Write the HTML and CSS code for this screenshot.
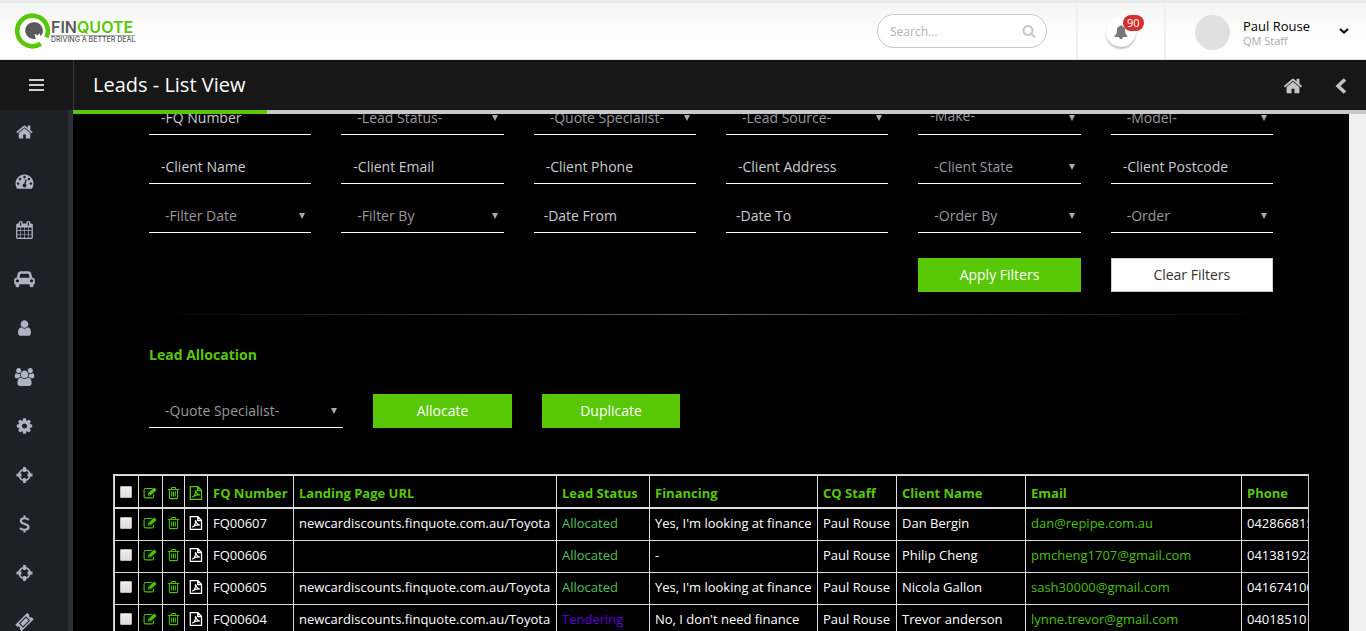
FILE: index.html
```html
<!DOCTYPE html>
<html lang="en">
<head>
<meta charset="utf-8">
<meta name="viewport" content="width=device-width, initial-scale=1">
<title>Leads - List View</title>
<link rel="stylesheet" href="styles.css">
</head>
<body>
<svg class="sprite" aria-hidden="true">
  <symbol id="i-home" viewBox="0 0 1792 1792"><path d="M1472 992v480q0 26-19 45t-45 19h-384v-384h-256v384h-384q-26 0-45-19t-19-45v-480q0-1 .5-3t.5-3l575-474 575 474q1 2 1 6zm223-69l-62 74q-8 9-21 11h-3q-13 0-21-7l-692-577-692 577q-12 8-24 7-13-2-21-11l-62-74q-8-10-7-23.500t11-21.500l719-599q32-26 76-26t76 26l244 204v-195q0-14 9-23t23-9h192q14 0 23 9t9 23v408l219 182q10 8 11 21.500t-7 23.500z"/></symbol>
  <symbol id="i-search" viewBox="0 0 1792 1792"><path d="M1216 832q0-185-131.500-316.500t-316.500-131.500-316.500 131.500-131.500 316.500 131.500 316.500 316.500 131.500 316.500-131.500 131.500-316.500zm512 832q0 52-38 90t-90 38q-54 0-90-38l-343-342q-179 124-399 124-143 0-273.500-55.500t-225-150-150-225-55.500-273.500 55.500-273.500 150-225 225-150 273.500-55.500 273.500 55.500 225 150 150 225 55.500 273.500q0 220-124 399l343 343q37 37 37 90z"/></symbol>
  <symbol id="i-bell" viewBox="0 0 1792 1792"><path d="M1664 1408q0 52-38 90t-90 38h-448q0 106-75 181t-181 75-181-75-75-181h-448q-52 0-90-38t-38-90q50-42 91-88t85-119.500 74.500-158.500 50-206 19.500-260q0-152 117-282.500t307-158.500q-8-19-8-39 0-40 28-68t68-28 68 28 28 68q0 20-8 39 190 28 307 158.500t117 282.500q0 139 19.500 260t50 206 74.500 158.500 85 119.500 91 88z" transform="translate(64 0)"/></symbol>
  <symbol id="i-dash" viewBox="0 0 1792 1792"><path d="M384 1152q0-53-37.500-90.500t-90.500-37.500-90.500 37.500-37.500 90.500 37.500 90.500 90.500 37.500 90.500-37.500 37.500-90.500zm192-448q0-53-37.500-90.500t-90.500-37.500-90.500 37.500-37.500 90.500 37.500 90.500 90.500 37.500 90.500-37.500 37.500-90.500zm428 481l101-382q6-26-7.500-48.500t-38.500-29.500-48 6.500-30 39.500l-101 382q-60 5-107 43.500t-63 98.500q-20 77 20 146t117 89 146-20 89-117q16-60-6-117t-72-91zm660-33q0-53-37.500-90.500t-90.500-37.500-90.500 37.500-37.500 90.500 37.500 90.500 90.500 37.500 90.500-37.500 37.500-90.500zm-640-640q0-53-37.500-90.500t-90.500-37.500-90.500 37.500-37.500 90.500 37.500 90.500 90.500 37.500 90.500-37.500 37.500-90.500zm448 192q0-53-37.500-90.500t-90.500-37.500-90.500 37.500-37.500 90.500 37.500 90.500 90.500 37.500 90.500-37.500 37.500-90.500zm320 448q0 261-141 483-19 29-54 29h-1402q-35 0-54-29-141-221-141-483 0-182 71-348t191-286 286-191 348-71 348 71 286 191 191 286 71 348z"/></symbol>
  <symbol id="i-calendar" viewBox="0 0 1792 1792"><path d="M192 1664h288v-288h-288v288zm352 0h320v-288h-320v288zm-352-352h288v-320h-288v320zm352 0h320v-320h-320v320zm-352-384h288v-288h-288v288zm736 736h320v-288h-320v288zm-384-736h320v-288h-320v288zm768 736h288v-288h-288v288zm-384-352h320v-320h-320v320zm-352-864v-288q0-13-9.500-22.500t-22.500-9.500h-64q-13 0-22.500 9.500t-9.500 22.500v288q0 13 9.500 22.500t22.500 9.500h64q13 0 22.500-9.500t9.500-22.500zm736 864h288v-320h-288v320zm-384-384h320v-288h-320v288zm384 0h288v-288h-288v288zm32-480v-288q0-13-9.500-22.500t-22.500-9.500h-64q-13 0-22.500 9.500t-9.500 22.500v288q0 13 9.500 22.500t22.500 9.500h64q13 0 22.500-9.500t9.500-22.500zm384-64v1280q0 52-38 90t-90 38h-1408q-52 0-90-38t-38-90v-1280q0-52 38-90t90-38h128v-96q0-66 47-113t113-47h64q66 0 113 47t47 113v96h384v-96q0-66 47-113t113-47h64q66 0 113 47t47 113v96h128q52 0 90 38t38 90z"/></symbol>
  <symbol id="i-car" viewBox="0 0 2048 1792"><path d="M480 1088q0-66-47-113t-113-47-113 47-47 113 47 113 113 47 113-47 47-113zm36-320h1016l-89-357q-2-8-14-17.500t-21-9.500h-768q-9 0-21 9.500t-14 17.500zm1372 320q0-66-47-113t-113-47-113 47-47 113 47 113 113 47 113-47 47-113zm160-96v384q0 14-9 23t-23 9h-96v128q0 80-56 136t-136 56-136-56-56-136v-128h-1024v128q0 80-56 136t-136 56-136-56-56-136v-128h-96q-14 0-23-9t-9-23v-384q0-93 65.500-158.500t158.500-65.500h28l105-419q23-94 104-157.500t179-63.500h768q98 0 179 63.500t104 157.500l105 419h28q93 0 158.500 65.500t65.500 158.500z"/></symbol>
  <symbol id="i-user" viewBox="0 0 1792 1792"><path d="M1536 1399q0 109-62.500 187t-150.500 78h-854q-88 0-150.500-78t-62.500-187q0-85 8.500-160.500t31.500-152 58.500-131 94-89 134.500-34.500q131 128 313 128t313-128q76 0 134.500 34.500t94 89 58.500 131 31.500 152 8.500 160.500zm-256-887q0 159-112.500 271.500t-271.500 112.500-271.500-112.500-112.500-271.500 112.500-271.500 271.500-112.500 271.500 112.500 112.500 271.500z"/></symbol>
  <symbol id="i-users" viewBox="0 0 1920 1792"><path d="M593 896q-162 5-265 128h-134q-82 0-138-40.500t-56-118.500q0-353 124-353 6 0 43.500 21t97.500 42.500 119 21.500q67 0 133-23-5 37-5 66 0 159 93 256zm1071 637q0 120-73 189.500t-194 69.500h-874q-121 0-194-69.500t-73-189.500q0-53 3.500-103.500t14-109 26.500-108.500 43-97.500 62-81 85.500-53.500 111.500-20q10 0 43 21.500t73 48 107 48 135 21.500 135-21.500 107-48 73-48 43-21.500q61 0 111.500 20t85.500 53.500 62 81 43 97.500 26.500 108.500 14 109 3.500 103.500zm-1024-1277q0 106-75 181t-181 75-181-75-75-181 75-181 181-75 181 75 75 181zm704 384q0 159-112.500 271.500t-271.500 112.500-271.500-112.500-112.500-271.500 112.500-271.500 271.500-112.500 271.500 112.500 112.500 271.500zm576 225q0 78-56 118.500t-138 40.500h-134q-103-123-265-128 93-97 93-256 0-29-5-66 66 23 133 23 59 0 119-21.500t97.500-42.500 43.500-21q124 0 124 353zm-128-609q0 106-75 181t-181 75-181-75-75-181 75-181 181-75 181 75 75 181z"/></symbol>
  <symbol id="i-cog" viewBox="0 0 1792 1792"><path d="M1152 896q0-106-75-181t-181-75-181 75-75 181 75 181 181 75 181-75 75-181zm512-109v222q0 12-8 23t-20 13l-185 28q-19 54-39 91 35 50 107 138 10 12 10 25t-9 23q-27 37-99 108t-94 71q-12 0-26-9l-138-108q-44 23-91 38-16 136-29 186-7 28-36 28h-222q-14 0-24.500-8.500t-11.500-21.500l-28-184q-49-16-90-37l-141 107q-10 9-25 9-14 0-25-11-126-114-165-168-7-10-7-23 0-12 8-23 15-21 51-66.500t54-70.500q-27-50-41-99l-183-27q-13-2-21-12.500t-8-23.500v-222q0-12 8-23t19-13l186-28q14-46 39-92-40-57-107-138-10-12-10-24 0-10 9-23 26-36 98.500-107.500t94.500-71.500q13 0 26 10l138 107q44-23 91-38 16-136 29-186 7-28 36-28h222q14 0 24.500 8.500t11.500 21.500l28 184q49 16 90 37l142-107q9-9 24-9 13 0 25 10 129 119 165 170 7 8 7 22 0 12-8 23-15 21-51 66.500t-54 70.500q26 50 41 98l183 28q13 2 21 12.500t8 23.500z"/></symbol>
  <symbol id="i-cross" viewBox="0 0 18 18"><circle cx="9" cy="9" r="5.400" fill="none" stroke="currentColor" stroke-width="1.700"/><path d="M7.600 1h2.800v5H7.600zM7.600 12h2.800v5H7.600zM1 7.600h5v2.800H1zM12 7.600h5v2.800h-5z"/></symbol>
  <symbol id="i-dollar" viewBox="0 0 18 18"><path d="M13.300 4.900C12 3.800 10.600 3.300 9 3.300c-2.200 0-3.700 1-3.700 2.700 0 4 7.700 2 7.700 6 0 1.800-1.600 2.800-3.900 2.800-1.900 0-3.400-.7-4.600-1.900M9 .5v2.800M9 14.800v2.700" fill="none" stroke="currentColor" stroke-width="2.100"/></symbol>
  <symbol id="i-ticket" viewBox="0 0 18 18"><g transform="rotate(-45 9 9)"><path fill-rule="evenodd" d="M.5 4.500h17v2.700a1.900 1.900 0 0 0 0 3.600v2.700H.5v-2.700a1.900 1.900 0 0 0 0-3.600zM4 6v6h10V6z"/><path d="M5 7h8v4H5z"/></g></symbol>
  <symbol id="i-edit" viewBox="0 0 14 14"><path d="M9.500 2.500H2.600a1.500 1.500 0 0 0-1.500 1.500v6.400a1.500 1.500 0 0 0 1.500 1.500H9a1.500 1.500 0 0 0 1.500-1.500V8.500" fill="none" stroke="currentColor" stroke-width="1.100"/><path d="M5 9.500V7.200l6.300-5.700L13.700 4 7.400 9.500z"/><path d="M6 8l1 .7" stroke="#000" stroke-width=".8"/></symbol>
  <symbol id="i-trash" viewBox="0 0 14 14"><path d="M.8 3.500h11.400M4.200 3.300l.7-1.800h3.200l.7 1.800M2.400 3.600v8.200q0 .8.800.8h6.600q.8 0 .8-.8V3.600M4.700 5.500v5M6.500 5.500v5M8.300 5.500v5" fill="none" stroke="currentColor" stroke-width="1.100"/></symbol>
  <symbol id="i-pdf" viewBox="0 0 14 14"><path d="M1.300.7h7.600l3.600 3.600v9H1.300zM8.700.8v3.700h3.700" fill="none" stroke="currentColor" stroke-width="1.300"/><path d="M3.200 11.300C5.500 10 6.800 7 6.400 4.300c1 3 2.200 4.600 4.400 4.900-2.200-.6-4.700.1-7 1.500" fill="none" stroke="currentColor" stroke-width="1.200"/></symbol>
</svg>

<header class="topbar">
  <a class="brand" href="#" aria-label="Finquote home">
    <svg class="brand-mark" viewBox="0 0 36 36" aria-hidden="true">
      <path d="M25.800 30.800A15.300 15.300 0 1 1 31.400 24.400" fill="none" stroke="#58c706" stroke-width="4.600"/>
      <path d="M18.600 9.200a8.400 8.400 0 1 0 2.200 16.500l-1.400-4.900 3.200 1.600 1.800-2.200 1.300 2.900A8.400 8.400 0 0 0 18.600 9.200z" fill="#58595b"/>
    </svg>
    <span class="brand-text">
      <span class="brand-name"><span class="brand-fin">FIN</span>QUOTE</span>
      <span class="brand-tag">DRIVING A BETTER DEAL</span>
    </span>
  </a>
  <form class="search">
    <input class="search-input" type="text" placeholder="Search..." aria-label="Search">
    <button class="search-btn" type="button" aria-label="Search"><svg class="ico-search"><use href="#i-search"/></svg></button>
  </form>
  <div class="notify">
    <button class="bell" type="button" aria-label="Notifications"><svg class="ico-bell"><use href="#i-bell"/></svg><span class="badge">90</span></button>
  </div>
  <button class="profile" type="button">
    <span class="avatar"></span>
    <span class="who"><span class="who-name">Paul Rouse</span><span class="who-role">QM Staff</span></span>
    <svg class="caret" viewBox="0 0 10 6" aria-hidden="true"><path d="M1 1l4 3.600L9 1" fill="none" stroke="#000" stroke-width="2"/></svg>
  </button>
</header>

<div class="titlebar">
  <button class="menu-btn" type="button" aria-label="Menu"><svg class="ico-bars" viewBox="0 0 15 12"><path d="M0 0h15v2H0zM0 5h15v2H0zM0 10h15v2H0z"/></svg></button>
  <h1 class="title">Leads - List View</h1>
  <nav class="crumbs">
    <a href="#" aria-label="Home"><svg class="ico-home"><use href="#i-home"/></svg></a>
    <a href="#" aria-label="Back"><svg class="ico-back" viewBox="0 0 12 16"><path d="M10 1.500L3 8l7 6.500" fill="none" stroke="currentColor" stroke-width="3.500"/></svg></a>
  </nav>
</div>

<div class="shell">
  <nav class="sidebar">
    <a href="#" aria-label="Home"><svg class="nav-ico"><use href="#i-home"/></svg></a>
    <a href="#" aria-label="Dashboard"><svg class="nav-ico"><use href="#i-dash"/></svg></a>
    <a href="#" aria-label="Calendar"><svg class="nav-ico"><use href="#i-calendar"/></svg></a>
    <a href="#" aria-label="Cars"><svg class="nav-ico"><use href="#i-car"/></svg></a>
    <a href="#" aria-label="Client"><svg class="nav-ico"><use href="#i-user"/></svg></a>
    <a href="#" aria-label="Teams"><svg class="nav-ico"><use href="#i-users"/></svg></a>
    <a href="#" aria-label="Settings"><svg class="nav-ico"><use href="#i-cog"/></svg></a>
    <a href="#" aria-label="Leads"><svg class="nav-ico"><use href="#i-cross"/></svg></a>
    <a href="#" aria-label="Finance"><svg class="nav-ico"><use href="#i-dollar"/></svg></a>
    <a href="#" aria-label="Targets"><svg class="nav-ico"><use href="#i-cross"/></svg></a>
    <a href="#" aria-label="Tickets"><svg class="nav-ico"><use href="#i-ticket"/></svg></a>
  </nav>

  <main class="main">
    <div class="progress"><div class="progress-fill"></div></div>
    <div class="viewport">
      <div class="page">
        <form class="filters">
          <input class="field" type="text" placeholder="-FQ Number" aria-label="FQ Number">
          <div class="pick"><select class="field" aria-label="Lead Status"><option>-Lead Status-</option></select></div>
          <div class="pick"><select class="field" aria-label="Quote Specialist"><option>-Quote Specialist-</option></select></div>
          <div class="pick"><select class="field" aria-label="Lead Source"><option>-Lead Source-</option></select></div>
          <div class="pick"><select class="field field-make" aria-label="Make"><option>-Make-</option></select></div>
          <div class="pick"><select class="field" aria-label="Model"><option>-Model-</option></select></div>

          <input class="field" type="text" placeholder="-Client Name" aria-label="Client Name">
          <input class="field" type="text" placeholder="-Client Email" aria-label="Client Email">
          <input class="field" type="text" placeholder="-Client Phone" aria-label="Client Phone">
          <input class="field" type="text" placeholder="-Client Address" aria-label="Client Address">
          <div class="pick"><select class="field" aria-label="Client State"><option>-Client State</option></select></div>
          <input class="field" type="text" placeholder="-Client Postcode" aria-label="Client Postcode">

          <div class="pick"><select class="field" aria-label="Filter Date"><option>-Filter Date</option></select></div>
          <div class="pick"><select class="field" aria-label="Filter By"><option>-Filter By</option></select></div>
          <input class="field field-date" type="text" placeholder="-Date From" aria-label="Date From">
          <input class="field field-date" type="text" placeholder="-Date To" aria-label="Date To">
          <div class="pick"><select class="field" aria-label="Order By"><option>-Order By</option></select></div>
          <div class="pick"><select class="field" aria-label="Order"><option>-Order</option></select></div>

          <button class="btn btn-apply" type="button">Apply Filters</button>
          <button class="btn btn-clear" type="reset">Clear Filters</button>
        </form>
        <hr class="rule">
        <h2 class="section">Lead Allocation</h2>
        <form class="allocate">
          <div class="pick"><select class="field" aria-label="Allocate to Quote Specialist"><option>-Quote Specialist-</option></select></div>
          <button class="btn" type="button">Allocate</button>
          <button class="btn" type="button">Duplicate</button>
        </form>
      </div>

      <div class="table-wrap">
        <table class="leads">
          <colgroup><col class="c-check"><col class="c-edit"><col class="c-trash"><col class="c-pdf"><col class="c-fq"><col class="c-url"><col class="c-status"><col class="c-fin"><col class="c-staff"><col class="c-client"><col class="c-email"><col class="c-phone"></colgroup>
          <thead>
            <tr>
              <th class="th-check"><input class="tick" type="checkbox" aria-label="Select all"></th>
              <th><svg class="row-ico"><use href="#i-edit"/></svg></th>
              <th><svg class="row-ico"><use href="#i-trash"/></svg></th>
              <th><svg class="row-ico"><use href="#i-pdf"/></svg></th>
              <th>FQ Number</th><th>Landing Page URL</th><th>Lead Status</th><th>Financing</th><th>CQ Staff</th><th>Client Name</th><th>Email</th><th>Phone</th>
            </tr>
          </thead>
          <tbody>
            <tr>
              <td><input class="tick" type="checkbox" aria-label="Select FQ00607"></td>
              <td><a href="#" aria-label="Edit"><svg class="row-ico"><use href="#i-edit"/></svg></a></td>
              <td><a href="#" aria-label="Delete"><svg class="row-ico"><use href="#i-trash"/></svg></a></td>
              <td><svg class="row-ico"><use href="#i-pdf"/></svg></td>
              <td>FQ00607</td><td>newcardiscounts.finquote.com.au/Toyota</td><td class="allocated">Allocated</td><td>Yes, I'm looking at finance</td><td>Paul Rouse</td><td>Dan Bergin</td><td><a href="#">dan@repipe.com.au</a></td><td>0428668150</td>
            </tr>
            <tr>
              <td><input class="tick" type="checkbox" aria-label="Select FQ00606"></td>
              <td><a href="#" aria-label="Edit"><svg class="row-ico"><use href="#i-edit"/></svg></a></td>
              <td><a href="#" aria-label="Delete"><svg class="row-ico"><use href="#i-trash"/></svg></a></td>
              <td><svg class="row-ico"><use href="#i-pdf"/></svg></td>
              <td>FQ00606</td><td></td><td class="allocated">Allocated</td><td>-</td><td>Paul Rouse</td><td>Philip Cheng</td><td><a href="#">pmcheng1707@gmail.com</a></td><td>0413819280</td>
            </tr>
            <tr>
              <td><input class="tick" type="checkbox" aria-label="Select FQ00605"></td>
              <td><a href="#" aria-label="Edit"><svg class="row-ico"><use href="#i-edit"/></svg></a></td>
              <td><a href="#" aria-label="Delete"><svg class="row-ico"><use href="#i-trash"/></svg></a></td>
              <td><svg class="row-ico"><use href="#i-pdf"/></svg></td>
              <td>FQ00605</td><td>newcardiscounts.finquote.com.au/Toyota</td><td class="allocated">Allocated</td><td>Yes, I'm looking at finance</td><td>Paul Rouse</td><td>Nicola Gallon</td><td><a href="#">sash30000@gmail.com</a></td><td>0416741000</td>
            </tr>
            <tr>
              <td><input class="tick" type="checkbox" aria-label="Select FQ00604"></td>
              <td><a href="#" aria-label="Edit"><svg class="row-ico"><use href="#i-edit"/></svg></a></td>
              <td><a href="#" aria-label="Delete"><svg class="row-ico"><use href="#i-trash"/></svg></a></td>
              <td><svg class="row-ico"><use href="#i-pdf"/></svg></td>
              <td>FQ00604</td><td>newcardiscounts.finquote.com.au/Toyota</td><td class="tendering">Tendering</td><td>No, I don't need finance</td><td>Paul Rouse</td><td>Trevor anderson</td><td><a href="#">lynne.trevor@gmail.com</a></td><td>0401851010</td>
            </tr>
          </tbody>
        </table>
      </div>
    </div>
  </main>
</div>
</body>
</html>
```

FILE: styles.css
```css
* { box-sizing: border-box; }

body {
  margin: 0;
  height: 100vh;
  display: flex;
  flex-direction: column;
  overflow: hidden;
  background: #f0f0f0;
  color: #fff;
  font: 14px/20px "Open Sans", "Noto Sans", sans-serif;
}

button, input, select { font: inherit; }
button { cursor: pointer; }
a { color: #58c706; text-decoration: none; }
svg { display: block; fill: currentColor; }
.sprite { display: none; }

/* Top bar */
.topbar {
  flex: none;
  display: flex;
  align-items: stretch;
  height: 60px;
  border-top: 3px solid #ebebeb;
  border-bottom: 1px solid #e4e4e4;
  background: linear-gradient(#f4f4f4, #fff 60%);
}
.brand {
  display: flex;
  align-items: center;
  margin-right: auto;
  padding-left: 15px;
}
.brand-mark { width: 36px; height: 36px; }
.brand-text { display: flex; flex-direction: column; padding-top: 1px; }
.brand-name {
  color: #58c706;
  font: 600 16px/16px Inter, sans-serif;
  border-bottom: 1px solid #aaa;
}
.brand-fin { color: #58595b; }
.brand-tag { color: #58595b; font: 500 7px/8px Inter, sans-serif; white-space: nowrap; }

.search {
  display: flex;
  align-items: center;
  align-self: flex-start;
  width: 170px;
  height: 34px;
  margin: 11px 29px 0 0;
  padding: 0 10px 0 12px;
  border: 1px solid #c8c8c8;
  border-radius: 17px;
  background: #fff;
}
.search-input {
  flex: 1;
  min-width: 0;
  padding: 2px 0 0;
  border: 0;
  outline: 0;
  background: none;
  font-size: 12px;
}
.search-input::placeholder { color: #b3b3b3; }
.search-btn { padding: 0; border: 0; background: none; color: #c8c8c8; }
.ico-search { width: 14px; height: 14px; }

.notify {
  display: flex;
  justify-content: center;
  width: 88px;
  padding: 12px 0;
  border-left: 2px solid #f0f0f0;
}
.bell {
  position: relative;
  display: flex;
  align-items: center;
  justify-content: center;
  width: 30px;
  height: 30px;
  margin-top: 2px;
  padding: 0;
  border: 0;
  border-radius: 50%;
  background: #fff;
  box-shadow: 0 2px 2px rgba(0, 0, 0, .25);
  color: #777;
}
.ico-bell { width: 14px; height: 14px; }
.badge {
  position: absolute;
  top: -2px;
  left: 17px;
  padding: 0 4px;
  border-radius: 8px;
  background: #d3302f;
  color: #fff;
  font-size: 11px;
  line-height: 16px;
}

.profile {
  display: flex;
  align-items: center;
  width: 202px;
  padding: 3px 17px 0 29px;
  border: 0;
  border-left: 2px solid #f0f0f0;
  background: none;
  text-align: left;
}
.avatar { width: 35px; height: 35px; border-radius: 50%; background: #e0e0e0; }
.who { display: flex; flex-direction: column; margin: 0 auto 0 13px; padding-top: 1px; }
.who-name { color: #000; font-size: 13px; line-height: 15px; }
.who-role { color: #aaa; font-size: 11px; line-height: 14px; }
.caret { width: 10px; height: 6px; margin-bottom: 4px; }

/* Title bar */
.titlebar {
  flex: none;
  display: flex;
  align-items: center;
  height: 50px;
  background: #171717;
}
.menu-btn {
  display: flex;
  align-items: center;
  justify-content: center;
  width: 74px;
  height: 50px;
  padding: 0;
  border: 0;
  border-right: 1px solid #383838;
  background: none;
  color: #d0d0d0;
}
.ico-bars { width: 15px; height: 12px; }
.title { margin: 0 auto 0 19px; font-size: 20px; font-weight: 400; line-height: 28px; }
.crumbs { display: flex; align-items: center; gap: 32px; padding: 1px 19px 0 0; }
.crumbs a { color: #c4c4c4; }
.ico-home { width: 20px; height: 20px; }
.ico-back { width: 12px; height: 16px; }

/* Body */
.shell { flex: 1; display: flex; min-height: 0; }
.sidebar {
  flex: none;
  width: 73px;
  overflow: hidden;
  border-right: 5px solid #2e3038;
  background: #1d2027;
}
.sidebar a { display: block; padding: 13px 19px 18px 0; color: #adb5c2; }
.nav-ico { width: 21px; height: 18px; margin: 0 auto; }

.main { flex: 1; display: flex; flex-direction: column; min-width: 0; }
.progress { flex: none; height: 4px; background: #c8c8c8; }
.progress-fill { width: 15%; height: 4px; background: #58c706; }
.viewport {
  flex: 1;
  min-height: 0;
  margin-right: 17px;
  overflow: hidden;
  background: #000;
}
/* Content rests at its scrolled position under the title bar */
.page { margin-top: -13px; padding: 0 76px; }

.filters { display: grid; grid-template-columns: repeat(6, 1fr); gap: 15px 30px; }
.field {
  display: block;
  width: 100%;
  min-width: 0;
  height: 34px;
  padding: 0 12px;
  border: 0;
  border-bottom: 1px solid #fff;
  border-radius: 0;
  outline: 0;
  background: #000;
  color: #ccc;
}
.field::placeholder { color: #ccc; opacity: 1; }
.field-date { padding: 0 10px; }
.pick { position: relative; min-width: 0; }
.pick .field { padding: 0 20px 0 16px; appearance: none; color: #999; }
.pick .field-make { padding: 0 20px 4px 12px; }
.pick::after {
  content: "";
  position: absolute;
  top: 14px;
  right: 6px;
  border: 3px solid transparent;
  border-top: 6px solid #aaa;
  border-bottom: 0;
  pointer-events: none;
}

.btn {
  height: 34px;
  padding: 0 12px;
  border: 1px solid #58c706;
  background: #58c706;
  color: #fff;
}
.btn-apply { grid-column: 5; margin-top: 10px; }
.btn-clear { margin-top: 10px; border-color: #ccc; background: #fff; color: #333; }

.rule {
  height: 1px;
  margin: 22px 0 0;
  border: 0;
  background: linear-gradient(90deg, transparent, #666, transparent);
}
.section { margin: 30px 0 29px; color: #58c706; font-size: 14px; font-weight: 700; line-height: 20px; }
.allocate { display: grid; grid-template-columns: 194px 139px 138px; gap: 30px; }

.table-wrap {
  margin: 46px 40px 0;
  overflow: hidden;
  border: 1px solid #ccc;
  border-bottom: 0;
}
.leads {
  width: 1217px;
  table-layout: fixed;
  border-collapse: separate;
  border-spacing: 0;
  border-top: 1px solid #ddd;
  border-left: 1px solid #ddd;
  font-size: 13px;
  line-height: 18px;
  white-space: nowrap;
}
.leads th, .leads td {
  height: 32px;
  padding: 0 5px 3px;
  border-right: 1px solid #ddd;
  border-bottom: 1px solid #ddd;
  text-align: left;
  vertical-align: middle;
}
.leads th {
  height: 33px;
  padding: 3px 5px 0;
  border-bottom-width: 2px;
  color: #58c706;
  font-weight: 700;
}
.leads .th-check { padding: 0 5px; }
.c-check, .c-edit { width: 24px; }
.c-trash { width: 22px; }
.c-pdf { width: 23px; }
.c-fq { width: 86px; }
.c-url { width: 263px; }
.c-status { width: 93px; }
.c-fin { width: 168px; }
.c-staff { width: 79px; }
.c-client { width: 129px; }
.c-email { width: 216px; }
.c-phone { width: 90px; }
.leads a { color: #4bc003; }
.leads .allocated { color: #4fc24f; }
.leads .tendering { color: #5c00d8; }
.row-ico { width: 14px; height: 14px; margin: 0 -1px; }
.tick {
  appearance: none;
  display: block;
  width: 12px;
  height: 12px;
  margin: 0;
  border: 1px solid #b8b8b8;
  border-radius: 1px;
  background: linear-gradient(#eee, #ddd);
}
```
